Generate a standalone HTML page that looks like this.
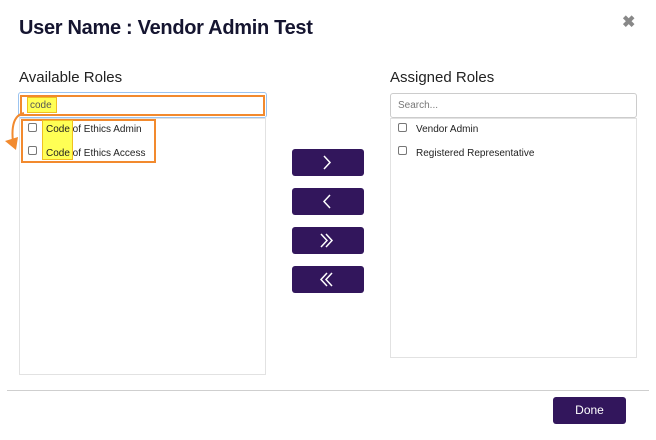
<!DOCTYPE html>
<html><head><style>
body{margin:0;width:656px;height:440px;background:#fff;font-family:"Liberation Sans",sans-serif;position:relative;overflow:hidden;color:#1c1c3c}
.a{position:absolute}
.t{left:19px;top:17px;font-size:20px;font-weight:bold;color:#151530;letter-spacing:-0.3px}
.lbl{font-size:15px;top:69px;color:#222}
.box{border:1px solid #e2e2e2;box-sizing:border-box}
.btn{background:#32165c;border-radius:3px;width:72px;height:27px;left:292px}
.cb{width:9px;height:9px;border:1px solid #777;border-radius:2px;box-sizing:border-box;background:#fff}
.it{font-size:10px;color:#222}
</style></head><body>
<div class="a t">User Name : Vendor Admin Test</div>
<div class="a" style="left:622px;top:12px;font-size:16px;color:#888;font-weight:bold">✖</div>
<div class="a lbl" style="left:19px">Available Roles</div>
<div class="a lbl" style="left:390px">Assigned Roles</div>

<div class="a box" style="left:19px;top:118px;width:247px;height:257px"></div>
<div class="a" style="left:18px;top:92px;width:249px;height:26px;border:1px solid #9cc4f0;border-radius:3px;box-sizing:border-box"></div>
<div class="a" style="left:20px;top:95px;width:245px;height:21px;border:2px solid #f28a2e;box-sizing:border-box"></div>
<div class="a" style="left:27px;top:97px;width:30px;height:16px;background:#ffff55;border:1px solid #f0c020;box-sizing:border-box"></div>
<div class="a it" style="left:30px;top:100px;color:#555">code</div>
<div class="a" style="left:21px;top:119px;width:135px;height:44px;border:2px solid #f28a2e;box-sizing:border-box"></div>
<div class="a" style="left:42px;top:120px;width:31px;height:40px;background:#ffff55;border:1px solid #f0c020;box-sizing:border-box"></div>
<div class="a cb" style="left:28px;top:123px"></div>
<div class="a it" style="left:46px;top:124px">Code of Ethics Admin</div>
<div class="a cb" style="left:28px;top:146px"></div>
<div class="a it" style="left:46px;top:148px">Code of Ethics Access</div>
<svg class="a" style="left:2px;top:108px" width="30" height="46"><path d="M22 5 Q8 8 11 34" stroke="#f28a2e" stroke-width="2" fill="none"/><path d="M3 33 L14 42 L16 29 Z" fill="#f28a2e"/></svg>

<div class="a box" style="left:390px;top:93px;width:247px;height:25px;border-color:#ccc;border-radius:3px"></div>
<div class="a" style="left:398px;top:100px;font-size:10px;color:#777">Search...</div>
<div class="a box" style="left:390px;top:118px;width:247px;height:240px"></div>
<div class="a cb" style="left:398px;top:123px"></div>
<div class="a it" style="left:416px;top:124px">Vendor Admin</div>
<div class="a cb" style="left:398px;top:146px"></div>
<div class="a it" style="left:416px;top:148px">Registered Representative</div>

<div class="a btn" style="top:149px"><svg width="72" height="27"><path d="M32 7 L38 13.5 L32 20" stroke="#fff" stroke-width="1.5" fill="none"/></svg></div>
<div class="a btn" style="top:188px"><svg width="72" height="27"><path d="M38 7 L32 13.5 L38 20" stroke="#fff" stroke-width="1.5" fill="none"/></svg></div>
<div class="a btn" style="top:227px"><svg width="72" height="27"><path d="M29 7 L35 13.5 L29 20 M34 7 L40 13.5 L34 20" stroke="#fff" stroke-width="1.5" fill="none"/></svg></div>
<div class="a btn" style="top:266px"><svg width="72" height="27"><path d="M35 7 L29 13.5 L35 20 M40 7 L34 13.5 L40 20" stroke="#fff" stroke-width="1.5" fill="none"/></svg></div>

<div class="a" style="left:7px;top:390px;width:642px;height:1px;background:#cfcfcf"></div>
<div class="a" style="left:553px;top:397px;width:73px;height:27px;background:#32165c;border-radius:3px;color:#fff;font-size:12px;text-align:center;line-height:27px">Done</div>
</body></html>
